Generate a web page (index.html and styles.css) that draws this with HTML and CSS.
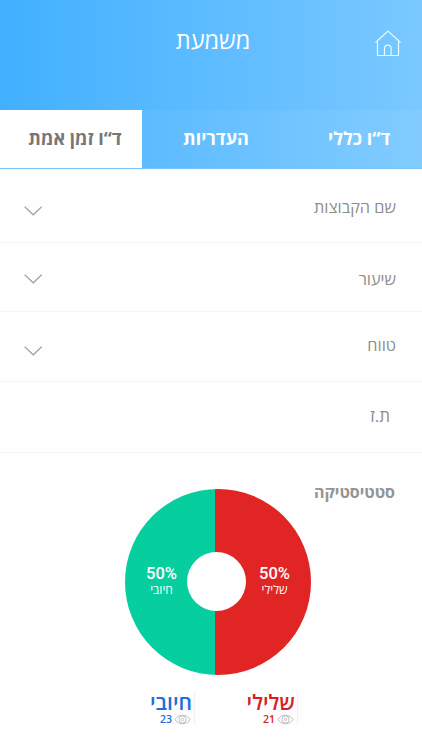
FILE: index.html
```html
<!DOCTYPE html>
<html lang="he" dir="rtl">
<head>
    <meta charset="UTF-8">
    <meta name="viewport" content="width=device-width, initial-scale=1.0">
    <title>משמעת</title>
    <link rel="stylesheet" href="styles.css">
</head>
<body>
    <header class="header">
        <a class="home" href="#">
            <svg width="28" height="28" viewBox="0 0 28 28">
                <path d="M1.5 13.5 L14 2 L26.5 13.5 M3.5 12 V26.5 H24.5 V12 M10.5 26.5 V19.5 a3.3 3.3 0 0 1 6.6 0 V26.5"/>
            </svg>
        </a>
        <h1>משמעת</h1>
    </header>

    <nav class="tabs">
        <a class="tab general" href="#"><span>ד“ו כללי</span></a>
        <a class="tab absences" href="#"><span>העדריות</span></a>
        <a class="tab active" href="#"><span>ד“ו זמן אמת</span></a>
    </nav>

    <main>
        <div class="field groups">
            <span class="label">שם הקבוצות</span>
            <svg class="arrow" width="20" height="12" viewBox="0 0 20 12"><path d="M1.7 1.7 L10.2 9.8 L18.7 1.7"/></svg>
        </div>
        <div class="field lesson">
            <span class="label">שיעור</span>
            <svg class="arrow" width="20" height="12" viewBox="0 0 20 12"><path d="M1.7 1.7 L10.2 9.8 L18.7 1.7"/></svg>
        </div>
        <div class="field range">
            <span class="label">טווח</span>
            <svg class="arrow" width="20" height="12" viewBox="0 0 20 12"><path d="M1.7 1.7 L10.2 9.8 L18.7 1.7"/></svg>
        </div>
        <div class="field identity">
            <span class="label">ת.ז</span>
        </div>

        <section class="stats">
            <h2>סטטיסטיקה</h2>
            <div class="pie">
                <div class="slice negative">
                    <strong>50%</strong>
                    <span>שלילי</span>
                </div>
                <div class="hole"></div>
                <div class="slice positive">
                    <strong>50%</strong>
                    <span>חיובי</span>
                </div>
            </div>
            <div class="legend">
                <div class="item red">
                    <span class="name">שלילי</span>
                    <div class="count">
                        <svg width="17" height="11" viewBox="0 0 17 11"><path d="M1 5.5 C4 -.2 13 -.2 16 5.5 C13 11.2 4 11.2 1 5.5 Z"/><circle cx="8.5" cy="5.5" r="3.6"/><circle cx="8.5" cy="5.5" r="1.2"/></svg>
                        <span>21</span>
                    </div>
                </div>
                <div class="item blue">
                    <span class="name">חיובי</span>
                    <div class="count">
                        <svg width="17" height="11" viewBox="0 0 17 11"><path d="M1 5.5 C4 -.2 13 -.2 16 5.5 C13 11.2 4 11.2 1 5.5 Z"/><circle cx="8.5" cy="5.5" r="3.6"/><circle cx="8.5" cy="5.5" r="1.2"/></svg>
                        <span>23</span>
                    </div>
                </div>
            </div>
        </section>
    </main>
</body>
</html>
```
FILE: styles.css
```css
* {
    box-sizing: border-box;
}

body {
    font-family: "Open Sans", "Noto Sans", sans-serif;
    background-color: #fefefe;
    margin: 0;
    height: 750px;
    overflow: hidden;
}

a {
    text-decoration: none;
}

svg {
    display: block;
    fill: none;
}

.header {
    display: grid;
    grid-template-columns: 68px 1fr 64px;
    height: 110px;
    padding-top: 24px;
    background: linear-gradient(to right, #41b0ff, #7ac8ff);
}

.home {
    padding: 5px 20px 0 0;
}

.home svg {
    stroke: #e4fbff;
    stroke-width: 1.2;
}

h1 {
    margin: 0;
    padding-left: 8px;
    text-align: center;
    color: white;
    font-size: 23.5px;
    font-weight: 400;
    line-height: 33px;
}

.tabs {
    display: grid;
    grid-template-columns: 138px 142px 142px;
    height: 59px;
    background: linear-gradient(to right, #5cbbff 33%, #82ccff);
    border-bottom: 1px solid #75c4fc;
}

.tab {
    display: flex;
    justify-content: center;
    color: white;
    font-size: 18px;
    font-weight: 700;
    line-height: 57px;
}

.general {
    padding-left: 12px;
}

.absences {
    padding-left: 6px;
}

.active {
    background-color: white;
    color: #777;
    padding-left: 8px;
}

.field {
    display: flex;
    justify-content: space-between;
    align-items: flex-start;
    padding: 0 26px 0 23px;
    border-bottom: 1px solid #f4f4f4;
    color: #8e8e8e;
    font-size: 16.3px;
    font-weight: 500;
    line-height: 22px;
}

.arrow {
    stroke: #a3a3a3;
    stroke-width: 1.2;
}

.groups {
    height: 74px;
    padding-top: 27px;
}

.groups .arrow {
    margin-top: 9px;
}

.lesson {
    height: 69px;
    padding-top: 25px;
}

.lesson .arrow {
    margin-top: 5px;
}

.range {
    height: 70px;
    padding-top: 22px;
}

.range .arrow {
    margin-top: 11px;
}

.identity {
    height: 71px;
    padding: 23px 32px 0 0;
    font-size: 17px;
}

.stats {
    display: grid;
    padding-top: 28px;
}

h2 {
    margin: 0 27px 0 0;
    height: 8px;
    color: #949494;
    font-size: 16px;
    font-weight: 700;
    line-height: 23px;
}

.pie {
    display: flex;
    justify-content: center;
    align-items: center;
    width: 186px;
    height: 186px;
    margin-right: 111px;
    border-radius: 50%;
    background: linear-gradient(to left, #e12424 96px, #06ce9f 96px);
}

.slice {
    display: flex;
    flex-direction: column;
    align-items: center;
    flex: none;
    color: white;
}

.slice strong {
    font-family: Roboto, sans-serif;
    font-size: 16.5px;
    font-weight: 500;
    line-height: 16px;
    direction: ltr;
}

.slice span {
    font-size: 12px;
    line-height: 16px;
}

.negative {
    width: 65px;
    padding-right: 8px;
    padding-bottom: 1px;
}

.positive {
    width: 62px;
    padding-left: 11px;
}

.hole {
    flex: none;
    width: 59px;
    height: 59px;
    margin-bottom: 1px;
    border-radius: 50%;
    background-color: white;
}

.legend {
    display: flex;
    gap: 45px;
    margin: 16px 124px 0 0;
}

.item {
    width: 58px;
    height: 34px;
    padding-right: 2px;
    border-right: 1px solid #f1f1f1;
}

.name {
    display: block;
    font-size: 21px;
    font-weight: 600;
    line-height: 23px;
}

.red {
    color: #d71f25;
}

.blue {
    color: #1b70dc;
}

.count {
    display: flex;
    align-items: center;
    gap: 2px;
    padding-right: 1px;
    font-size: 10.5px;
    font-weight: 600;
    line-height: 11px;
}

.count svg {
    stroke: #b8b8b8;
    stroke-width: .9;
}
```
